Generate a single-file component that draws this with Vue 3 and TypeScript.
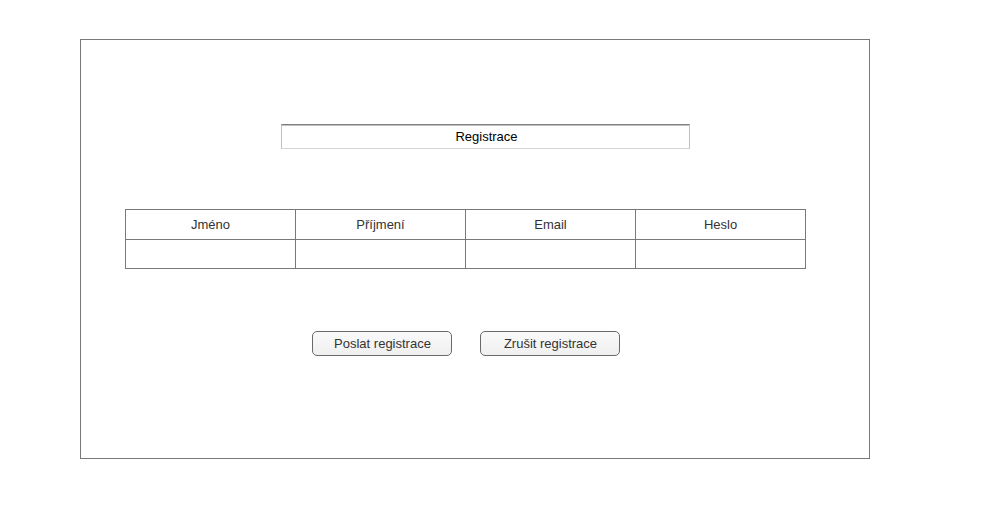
<script setup lang="ts">
import { ref } from 'vue'

const title = ref('Registrace')
const columns: string[] = ['Jméno', 'Příjmení', 'Email', 'Heslo']
const values = ref<string[]>(columns.map(() => ''))

function reset(): void {
  values.value = columns.map(() => '')
}
</script>

<template>
  <main class="page">
    <form class="panel" @submit.prevent>
      <input v-model="title" class="title" type="text" aria-label="Registrace" />
      <table class="fields">
        <thead>
          <tr>
            <th v-for="(column, i) in columns" :id="`column-${i}`" :key="column" scope="col">{{ column }}</th>
          </tr>
        </thead>
        <tbody>
          <tr>
            <td v-for="(column, i) in columns" :key="column">
              <input v-model="values[i]" class="cell" :type="i === 3 ? 'password' : 'text'" :aria-labelledby="`column-${i}`" />
            </td>
          </tr>
        </tbody>
      </table>
      <div class="actions">
        <button type="submit">Poslat registrace</button>
        <button type="button" @click="reset">Zrušit registrace</button>
      </div>
    </form>
  </main>
</template>

<style>
body {
  background: #fff;
}
</style>

<style scoped>
.page {
  padding: 39px 119px 40px 80px;
  font-family: "Liberation Sans", Arial, sans-serif;
  font-size: 13px;
  line-height: 15px;
  color: #333;
}
.panel {
  box-sizing: border-box;
  display: flex;
  flex-direction: column;
  padding: 84px 63px 102px 44px;
  border: 1px solid #797979;
}
.title {
  box-sizing: border-box;
  width: 60%;
  height: 25px;
  align-self: center;
  margin: 0 0 0 40px;
  padding: 0 0 0 2px;
  border: 1px solid #c0c0c0;
  border-top-color: #808080;
  border-bottom-color: #d4d4d4;
  box-shadow: inset 0 1px #c0c0c0;
  background: #fff;
  color: #000;
  font: inherit;
  text-align: center;
}
.fields {
  width: 100%;
  margin-top: 60px;
  border-collapse: collapse;
  table-layout: fixed;
}
th,
td {
  height: 29px;
  padding: 0;
  border: 1px solid #797979;
  font-weight: normal;
  text-align: center;
}
td {
  height: 28px;
}
.cell {
  display: block;
  box-sizing: border-box;
  width: 100%;
  height: 28px;
  padding: 0 8px;
  border: 0;
  background: transparent;
  font: inherit;
}
.actions {
  display: flex;
  justify-content: center;
  gap: 28px;
  margin-top: 62px;
}
button {
  box-sizing: border-box;
  width: 140px;
  height: 25px;
  padding: 0 0 0 2px;
  border: 1px solid #6a6a6a;
  border-radius: 5px;
  background: linear-gradient(#fafafa, #efefef);
  color: #333;
  font: inherit;
}
</style>
